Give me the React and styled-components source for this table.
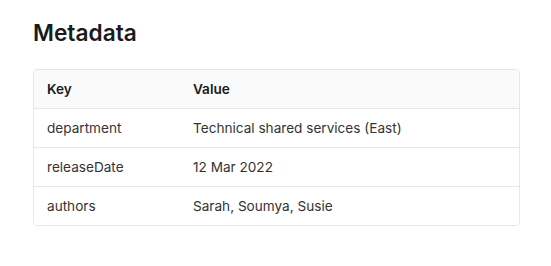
import styled, { createGlobalStyle } from "styled-components";

const GlobalStyle = createGlobalStyle`
  body {
    margin: 0;
    background: #ffffff;
    font-family: Inter, "Noto Sans", sans-serif;
    color: #1c1c1e;
  }
`;

const Page = styled.div`
  padding: 17px 31px 40px 33px;
`;

const Title = styled.h2`
  margin: 0 0 20px;
  font-size: 22.7px;
  line-height: 32px;
  font-weight: 600;
  color: #1a1a1a;
`;

const Table = styled.div`
  border: 1px solid #e6e6ea;
  border-radius: 4px;
  overflow: hidden;
`;

const Row = styled.div`
  display: grid;
  grid-template-columns: 146px 1fr;
  height: 38px;
  align-items: center;
  background: ${(p) => (p.$head ? "#fafafa" : "#ffffff")};
  border-top: ${(p) => (p.$first ? "none" : "1px solid #e6e6ea")};
  font-size: 13.6px;
  font-weight: ${(p) => (p.$head ? 600 : 400)};
  color: ${(p) => (p.$head ? "#1a1a1a" : "#333336")};
`;

const Cell = styled.div`
  padding-left: 13px;
`;

const rows = [
  ["department", "Technical shared services (East)"],
  ["releaseDate", "12 Mar 2022"],
  ["authors", "Sarah, Soumya, Susie"],
];

export default function App() {
  return (
    <Page>
      <GlobalStyle />
      <Title>Metadata</Title>
      <Table>
        <Row $head $first>
          <Cell>Key</Cell>
          <Cell>Value</Cell>
        </Row>
        {rows.map(([k, v]) => (
          <Row key={k}>
            <Cell>{k}</Cell>
            <Cell>{v}</Cell>
          </Row>
        ))}
      </Table>
    </Page>
  );
}
